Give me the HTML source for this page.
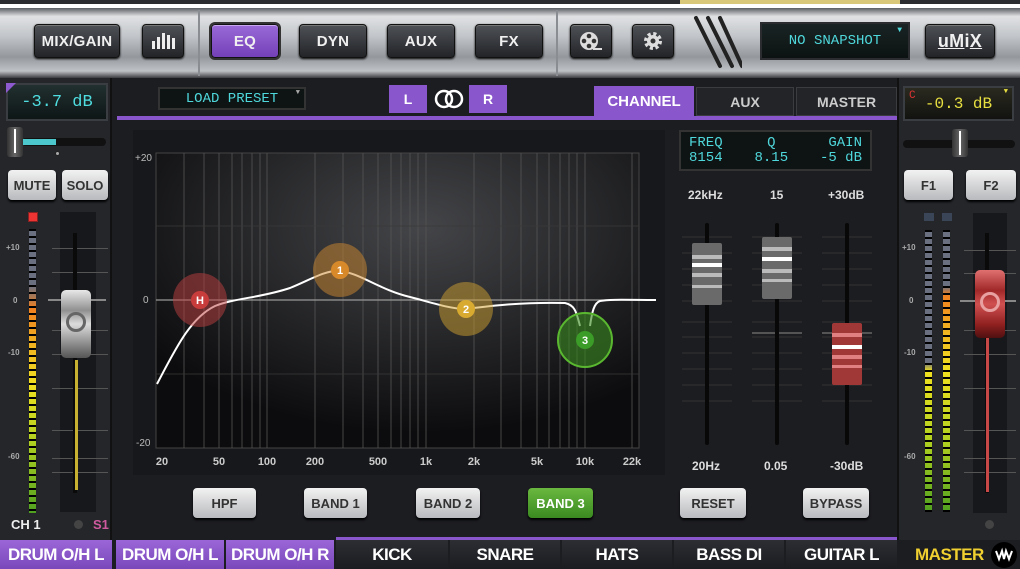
<!DOCTYPE html>
<html><head><meta charset="utf-8"><style>
*{box-sizing:border-box;margin:0;padding:0}
body{width:1020px;height:569px;overflow:hidden;background:#1c1d21;font-family:"Liberation Sans",sans-serif;position:relative;color:#ddd}
.a{position:absolute}
.tb{left:0;top:8px;width:1020px;height:70px;background:linear-gradient(#5a5d62 0%,#e0e2e4 12%,#c2c5c9 40%,#94989d 70%,#bfc2c5 90%,#3a3c40 100%)}
.btn{position:absolute;border-radius:4px;background:linear-gradient(#4e5156,#222428);border:1px solid #111;box-shadow:0 1px 2px #000,inset 0 1px 0 #777;color:#f0f0f0;font-weight:bold;font-size:15px;display:flex;align-items:center;justify-content:center;letter-spacing:0.3px}
.pur{background:linear-gradient(#9a6ad8,#7440b8);box-shadow:0 0 0 2px #333,inset 0 1px 0 #c9a8f0}
.lcd{position:absolute;background:#0e1414;border:2px solid #3a3d42;font-family:"Liberation Mono",monospace;display:flex;align-items:center;justify-content:center}
.gb{position:absolute;border-radius:4px;background:linear-gradient(#f2f2f2,#b8babd);color:#333;font-weight:bold;font-size:13px;display:flex;align-items:center;justify-content:center;box-shadow:0 2px 2px #000}
.tab{position:absolute;top:540px;height:29px;font-weight:bold;font-size:17px;display:flex;align-items:center;justify-content:center;color:#fff;background:linear-gradient(#2c2e33,#1b1c20);letter-spacing:-0.5px}
.tp{background:linear-gradient(#9a66d8,#7a48ba)}
.lbl{position:absolute;font-size:12px;font-weight:bold;color:#ddd}
.tick{position:absolute;height:1px;background:#555}
</style></head><body>
<div class="a" style="left:0;top:0;width:1020px;height:4px;background:#2b2c30"></div>
<div class="a" style="left:0;top:4px;width:1020px;height:5px;background:#fff"></div>
<div class="a" style="left:680px;top:0;width:220px;height:4px;background:#d9c87a"></div>
<div class="a tb"></div>
<div class="a" style="left:198px;top:10px;width:2px;height:66px;background:#8a8d92"></div>
<div class="a" style="left:556px;top:10px;width:2px;height:66px;background:#8a8d92"></div>
<div class="btn" style="left:34px;top:24px;width:86px;height:34px">MIX/GAIN</div>
<div class="btn" style="left:142px;top:24px;width:42px;height:34px"><svg width="26" height="20"><g fill="#eee"><rect x="2" y="10" width="3" height="8"/><rect x="7" y="6" width="3" height="12"/><rect x="12" y="2" width="3" height="16"/><rect x="17" y="4" width="3" height="14"/><rect x="22" y="7" width="3" height="11"/></g></svg></div>
<div class="btn pur" style="left:211px;top:24px;width:68px;height:34px">EQ</div>
<div class="btn" style="left:299px;top:24px;width:68px;height:34px">DYN</div>
<div class="btn" style="left:387px;top:24px;width:68px;height:34px">AUX</div>
<div class="btn" style="left:475px;top:24px;width:68px;height:34px">FX</div>
<div class="btn" style="left:570px;top:24px;width:42px;height:34px"><svg width="26" height="22"><circle cx="11" cy="11" r="9" fill="#ddd"/><g fill="#333"><circle cx="11" cy="6" r="2.3"/><circle cx="6" cy="11" r="2.3"/><circle cx="16" cy="11" r="2.3"/><circle cx="11" cy="16" r="2.3"/></g><path d="M15 19h9" stroke="#ddd" stroke-width="2"/></svg></div>
<div class="btn" style="left:632px;top:24px;width:42px;height:34px"><svg width="22" height="22"><circle cx="11" cy="11" r="7" fill="none" stroke="#ddd" stroke-width="4" stroke-dasharray="3 2.5"/><circle cx="11" cy="11" r="6" fill="#ddd"/><circle cx="11" cy="11" r="2.5" fill="#333"/></svg></div>
<svg class="a" style="left:692px;top:14px" width="50" height="56"><g stroke="#222" stroke-width="4" stroke-linecap="round"><path d="M4 4L28 52"/><path d="M16 4L40 52"/><path d="M28 4L50 52" /></g></svg>
<div class="lcd" style="left:760px;top:22px;width:150px;height:38px;color:#4fd8dc;font-size:14px;border-color:#2a2c30;background:linear-gradient(#1a2424,#0c1212)">NO SNAPSHOT<span style="position:absolute;right:6px;top:2px;font-size:8px">▼</span></div>
<div class="btn" style="left:925px;top:24px;width:70px;height:34px;font-size:18px"><span style="text-decoration:underline">uM</span>i<span style="text-decoration:underline">X</span></div>

<!-- left panel -->
<div class="a" style="left:0;top:78px;width:112px;height:462px;background:#24262a;border-right:2px solid #111"></div>
<div class="lcd" style="left:6px;top:83px;width:102px;height:38px;color:#4fdde0;font-size:17px;background:linear-gradient(#223030,#0e1616)">-3.7 dB</div>
<div class="a" style="left:6px;top:83px;width:0;height:0;border-top:10px solid #8e5ad0;border-right:10px solid transparent"></div>
<div class="a" style="left:22px;top:138px;width:84px;height:8px;background:#111;border-radius:4px"></div>
<div class="a" style="left:22px;top:139px;width:34px;height:6px;background:#4cc8cc"></div>
<div class="a" style="left:7px;top:127px;width:16px;height:30px;background:linear-gradient(90deg,#333,#666,#333);border-radius:3px"></div>
<div class="a" style="left:14px;top:129px;width:2px;height:24px;background:#fff"></div>
<div class="a" style="left:55px;top:151px;width:5px;height:5px;border-radius:50%;background:#aaa;border:1px solid #222"></div>
<div class="gb" style="left:8px;top:170px;width:48px;height:30px">MUTE</div>
<div class="gb" style="left:62px;top:170px;width:46px;height:30px">SOLO</div>
<div class="a" style="left:28px;top:212px;width:10px;height:10px;background:#e33;border:1px solid #822"></div>
<div class="a" style="left:29px;top:229px;width:7px;height:284px;background:repeating-linear-gradient(#000 0 2px,transparent 2px 7px),linear-gradient(#6a7080 0%,#6a7080 20%,#f08020 28%,#f0b020 40%,#f0e020 55%,#b0d020 75%,#50a020 100%)"></div>
<div class="lbl" style="left:6px;top:243px;font-size:8px;color:#aaa">+10</div>
<div class="lbl" style="left:13px;top:296px;font-size:8px;color:#aaa">0</div>
<div class="lbl" style="left:8px;top:348px;font-size:8px;color:#aaa">-10</div>
<div class="lbl" style="left:8px;top:452px;font-size:8px;color:#aaa">-60</div>
<div class="a" style="left:60px;top:212px;width:36px;height:300px;background:#17181b"></div>
<div class="tick" style="left:52px;top:248px;width:56px"></div><div class="tick" style="left:52px;top:272px;width:56px"></div><div class="tick" style="left:52px;top:330px;width:56px"></div><div class="tick" style="left:52px;top:354px;width:56px"></div><div class="tick" style="left:52px;top:388px;width:56px"></div><div class="tick" style="left:52px;top:430px;width:56px"></div><div class="tick" style="left:52px;top:458px;width:56px"></div><div class="tick" style="left:52px;top:472px;width:56px"></div>
<div class="a" style="left:73px;top:233px;width:4px;height:260px;background:#0a0a0a"></div>
<div class="a" style="left:75px;top:360px;width:3px;height:130px;background:#c8b030"></div>
<div class="a" style="left:48px;top:299px;width:58px;height:2px;background:#888"></div>
<div class="a" style="left:61px;top:290px;width:30px;height:68px;border-radius:5px;background:linear-gradient(#e8e8e8,#909090 30%,#dcdcdc 50%,#8a8a8a 80%,#555)"></div>
<div class="a" style="left:66px;top:312px;width:20px;height:20px;border-radius:50%;border:3px solid #666"></div>
<div class="lbl" style="left:11px;top:517px;font-size:13px;color:#eee">CH 1</div>
<div class="lbl" style="left:93px;top:517px;font-size:13px;color:#d05aa0">S1</div>
<div class="a" style="left:74px;top:520px;width:9px;height:9px;border-radius:50%;background:#444"></div>

<!-- center header -->
<div class="lcd" style="left:158px;top:87px;width:148px;height:23px;color:#4fd8dc;font-size:14px;border-color:#333">LOAD PRESET<span style="position:absolute;right:4px;top:0;font-size:7px;color:#aaa">▼</span></div>
<div class="a" style="left:389px;top:85px;width:38px;height:28px;background:#8a56cc;color:#fff;font-weight:bold;font-size:14px;display:flex;align-items:center;justify-content:center">L</div>
<svg class="a" style="left:432px;top:88px" width="34" height="22"><circle cx="12" cy="11" r="8" fill="none" stroke="#fff" stroke-width="2.5"/><circle cx="22" cy="11" r="8" fill="none" stroke="#fff" stroke-width="2.5"/></svg>
<div class="a" style="left:469px;top:85px;width:38px;height:28px;background:#8a56cc;color:#fff;font-weight:bold;font-size:14px;display:flex;align-items:center;justify-content:center">R</div>
<div class="a" style="left:117px;top:116px;width:780px;height:4px;background:#8a56cc"></div>
<div class="a" style="left:594px;top:86px;width:100px;height:30px;background:#8a56cc;color:#fff;font-weight:bold;font-size:15px;display:flex;align-items:center;justify-content:center">CHANNEL</div>
<div class="a" style="left:696px;top:87px;width:98px;height:29px;background:#222428;border:1px solid #3a3c40;color:#ccc;font-weight:bold;font-size:14px;display:flex;align-items:center;justify-content:center">AUX</div>
<div class="a" style="left:796px;top:87px;width:101px;height:29px;background:#222428;border:1px solid #3a3c40;color:#ccc;font-weight:bold;font-size:14px;display:flex;align-items:center;justify-content:center">MASTER</div>

<!-- EQ graph -->
<div class="a" style="left:133px;top:130px;width:532px;height:345px;background:#17181b"></div>
<svg class="a" style="left:133px;top:130px" width="532" height="345" viewBox="133 130 532 345">
<defs><radialGradient id="g" cx="0.55" cy="0.25" r="0.7"><stop offset="0" stop-color="#444548"/><stop offset="1" stop-color="#0c0c0e"/></radialGradient></defs>
<rect x="156" y="153" width="483" height="295" fill="url(#g)" stroke="#444"/>
<g stroke="#555" stroke-width="0.8">
<path d="M184 153V448M204 153V448M219 153V448M232 153V448M242 153V448M252 153V448M260 153V448M267 153V448M315 153V448M343 153V448M363 153V448M378 153V448M391 153V448M401 153V448M410 153V448M418 153V448M426 153V448M474 153V448M501 153V448M521 153V448M537 153V448M549 153V448M560 153V448M569 153V448M577 153V448M585 153V448M632 153V448"/>
<path d="M156 226H639M156 374H639" stroke="#3a3a3a"/>
</g>
<path d="M156 300H639" stroke="#999" stroke-width="1.2"/>
<path d="M157 384C175 350 190 318 215 306C235 298 260 298 290 288C310 280 325 270 340 271C360 273 380 290 410 297C430 302 450 309 466 309C490 306 520 302 565 303C574 305 576 310 580 326M590 326C592 312 594 303 600 301C610 299 630 300 656 300" fill="none" stroke="#fff" stroke-width="2"/>
<circle cx="200" cy="300" r="27" fill="#c04040" fill-opacity="0.5"/><circle cx="200" cy="300" r="9" fill="#c83c3c"/>
<circle cx="340" cy="270" r="27" fill="#d08a30" fill-opacity="0.5"/><circle cx="340" cy="270" r="9" fill="#d88a2a"/>
<circle cx="466" cy="309" r="27" fill="#d0a030" fill-opacity="0.5"/><circle cx="466" cy="309" r="9" fill="#d8aa30"/>
<circle cx="585" cy="340" r="27" fill="#3a8a20" fill-opacity="0.6" stroke="#5ab830" stroke-width="2"/><circle cx="585" cy="340" r="9" fill="#3c9c28"/>
<g fill="#fff" font-family="Liberation Sans" font-weight="bold" font-size="11" text-anchor="middle"><text x="200" y="304">H</text><text x="340" y="274">1</text><text x="466" y="313">2</text><text x="585" y="344">3</text></g>
<g fill="#bbb" font-family="Liberation Sans" font-size="10"><text x="135" y="161">+20</text><text x="143" y="303">0</text><text x="136" y="446">-20</text></g>
<g fill="#ccc" font-family="Liberation Sans" font-weight="bold" font-size="11" text-anchor="middle"><text x="162" y="465">20</text><text x="219" y="465">50</text><text x="267" y="465">100</text><text x="315" y="465">200</text><text x="378" y="465">500</text><text x="426" y="465">1k</text><text x="474" y="465">2k</text><text x="537" y="465">5k</text><text x="585" y="465">10k</text><text x="632" y="465">22k</text></g>
</svg>
<div class="gb" style="left:193px;top:488px;width:63px;height:30px">HPF</div>
<div class="gb" style="left:304px;top:488px;width:63px;height:30px">BAND 1</div>
<div class="gb" style="left:416px;top:488px;width:64px;height:30px">BAND 2</div>
<div class="gb" style="left:528px;top:488px;width:65px;height:30px;background:linear-gradient(#6ab840,#3a8a20);color:#fff">BAND 3</div>

<!-- params -->
<div class="lcd" style="left:679px;top:130px;width:193px;height:41px;color:#4fd8dc;font-size:14px;line-height:15px;justify-content:space-between;padding:0 8px;border-color:#333">
<div>FREQ<br>8154</div><div style="text-align:center">Q<br>8.15</div><div style="text-align:right">GAIN<br>-5 dB</div></div>
<div class="lbl" style="left:688px;top:188px">22kHz</div><div class="lbl" style="left:770px;top:188px">15</div><div class="lbl" style="left:828px;top:188px">+30dB</div>
<div class="lbl" style="left:692px;top:459px">20Hz</div><div class="lbl" style="left:764px;top:459px">0.05</div><div class="lbl" style="left:830px;top:459px">-30dB</div>
<svg class="a" style="left:680px;top:215px" width="200" height="240">
<g stroke="#333" stroke-width="1"><path d="M2 107H52M72 107H122M142 107H192M2 122H52M72 122H122M142 122H192M2 138H52M72 138H122M142 138H192M2 154H52M72 154H122M142 154H192M2 170H52M72 170H122M142 170H192M2 186H52M72 186H122M142 186H192M2 22H52M72 22H122M142 22H192M2 38H52M72 38H122M142 38H192M2 54H52M72 54H122M142 54H192M2 70H52M72 70H122M142 70H192M2 86H52M72 86H122M142 86H192"/></g>
<path d="M72 118H122M142 118H192" stroke="#666" stroke-width="1.5"/>
<g fill="#080808"><rect x="25" y="8" width="4" height="222" rx="2"/><rect x="95" y="8" width="4" height="222" rx="2"/><rect x="165" y="8" width="4" height="222" rx="2"/></g>
<rect x="12" y="28" width="30" height="62" rx="2" fill="#6a6a6a"/><g fill="#bbb"><rect x="12" y="40" width="30" height="4"/><rect x="12" y="58" width="30" height="4"/><rect x="12" y="70" width="30" height="3"/></g><rect x="12" y="48" width="30" height="4" fill="#fff"/>
<rect x="82" y="22" width="30" height="62" rx="2" fill="#6a6a6a"/><g fill="#bbb"><rect x="82" y="32" width="30" height="4"/><rect x="82" y="54" width="30" height="4"/><rect x="82" y="64" width="30" height="3"/></g><rect x="82" y="42" width="30" height="4" fill="#fff"/>
<rect x="152" y="108" width="30" height="62" rx="2" fill="#a03838"/><g fill="#e08080"><rect x="152" y="118" width="30" height="4"/><rect x="152" y="140" width="30" height="4"/><rect x="152" y="150" width="30" height="3"/></g><rect x="152" y="130" width="30" height="4" fill="#fff"/>
</svg>
<div class="gb" style="left:680px;top:488px;width:66px;height:30px">RESET</div>
<div class="gb" style="left:803px;top:488px;width:66px;height:30px">BYPASS</div>

<!-- master panel -->
<div class="a" style="left:897px;top:78px;width:123px;height:462px;background:#24262a;border-left:2px solid #111"></div>
<div class="lcd" style="left:903px;top:86px;width:111px;height:35px;color:#e8e040;font-size:16px;background:linear-gradient(#2a2a20,#121210)">-0.3 dB<span style="position:absolute;left:4px;top:2px;color:#d33;font-size:11px">C</span><span style="position:absolute;right:4px;top:0;font-size:7px;color:#e8e040">▼</span></div>
<div class="a" style="left:903px;top:140px;width:112px;height:8px;background:#111;border-radius:4px"></div>
<div class="a" style="left:952px;top:129px;width:16px;height:28px;background:linear-gradient(90deg,#333,#666,#333);border-radius:3px"></div>
<div class="a" style="left:959px;top:131px;width:2px;height:24px;background:#fff"></div>
<div class="gb" style="left:904px;top:170px;width:49px;height:30px">F1</div>
<div class="gb" style="left:966px;top:170px;width:50px;height:30px">F2</div>
<div class="a" style="left:924px;top:213px;width:10px;height:8px;background:#3a4658"></div>
<div class="a" style="left:942px;top:213px;width:10px;height:8px;background:#3a4658"></div>
<div class="a" style="left:925px;top:230px;width:7px;height:282px;background:repeating-linear-gradient(#000 0 2px,transparent 2px 7px),linear-gradient(#6a7080 0%,#6a7080 47%,#f0e020 50%,#b0d020 75%,#50a020 100%)"></div>
<div class="a" style="left:943px;top:230px;width:7px;height:282px;background:repeating-linear-gradient(#000 0 2px,transparent 2px 7px),linear-gradient(#6a7080 0%,#6a7080 20%,#f08020 23%,#f0b020 35%,#f0e020 50%,#b0d020 75%,#50a020 100%)"></div>
<div class="lbl" style="left:902px;top:243px;font-size:8px;color:#aaa">+10</div>
<div class="lbl" style="left:909px;top:296px;font-size:8px;color:#aaa">0</div>
<div class="lbl" style="left:904px;top:348px;font-size:8px;color:#aaa">-10</div>
<div class="lbl" style="left:904px;top:452px;font-size:8px;color:#aaa">-60</div>
<div class="a" style="left:973px;top:213px;width:34px;height:300px;background:#17181b"></div>
<div class="tick" style="left:964px;top:250px;width:52px"></div><div class="tick" style="left:964px;top:273px;width:52px"></div><div class="tick" style="left:964px;top:330px;width:52px"></div><div class="tick" style="left:964px;top:354px;width:52px"></div><div class="tick" style="left:964px;top:388px;width:52px"></div><div class="tick" style="left:964px;top:430px;width:52px"></div><div class="tick" style="left:964px;top:458px;width:52px"></div><div class="tick" style="left:964px;top:472px;width:52px"></div>
<div class="a" style="left:985px;top:233px;width:4px;height:260px;background:#0a0a0a"></div>
<div class="a" style="left:986px;top:330px;width:3px;height:162px;background:#c84848"></div>
<div class="a" style="left:960px;top:300px;width:56px;height:2px;background:#888"></div>
<div class="a" style="left:975px;top:270px;width:30px;height:68px;border-radius:5px;background:linear-gradient(#e07070,#a02828 30%,#d05050 50%,#902020 80%,#501010)"></div>
<div class="a" style="left:980px;top:292px;width:20px;height:20px;border-radius:50%;border:3px solid #e8a0a0"></div>
<div class="a" style="left:985px;top:520px;width:9px;height:9px;border-radius:50%;background:#444"></div>

<!-- bottom tabs -->
<div class="tab tp" style="left:0;width:112px">DRUM O/H L</div>
<div class="tab tp" style="left:116px;width:108px">DRUM O/H L</div>
<div class="tab tp" style="left:226px;width:108px">DRUM O/H R</div>
<div class="tab" style="left:336px;width:112px">KICK</div>
<div class="tab" style="left:450px;width:110px">SNARE</div>
<div class="tab" style="left:562px;width:110px">HATS</div>
<div class="tab" style="left:674px;width:110px">BASS DI</div>
<div class="tab" style="left:786px;width:111px">GUITAR L</div>
<div class="a" style="left:336px;top:537px;width:561px;height:3px;background:#8a56cc"></div>
<div class="tab" style="left:899px;width:121px;color:#f0d030;background:#1c1d21;justify-content:flex-start;padding-left:16px">MASTER</div>
<svg class="a" style="left:990px;top:541px" width="28" height="28"><circle cx="14" cy="14" r="13" fill="#000"/><path d="M6 10l3 8 3-8 2 8 2-8 3 8 3-8" fill="none" stroke="#fff" stroke-width="2"/></svg>
</body></html>
